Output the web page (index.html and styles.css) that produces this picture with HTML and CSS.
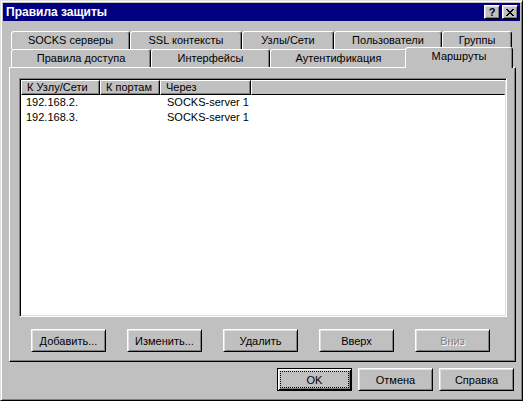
FILE: index.html
```html
<!DOCTYPE html>
<html lang="ru">
<head>
<meta charset="utf-8">
<title>Правила защиты</title>
<link rel="stylesheet" href="styles.css">
</head>
<body>
<div class="window">
  <div class="titlebar">
    <span class="title">Правила защиты</span>
    <div class="tbtns">
      <span class="tbtn help">?</span>
      <span class="tbtn close">
        <svg width="8" height="7" viewBox="0 0 8 7" shape-rendering="crispEdges"><path fill="#000" d="M0 0h2v1h-2z M6 0h2v1h-2z M1 1h2v1h-2z M5 1h2v1h-2z M2 2h4v1h-4z M3 3h2v1h-2z M2 4h4v1h-4z M1 5h2v1h-2z M5 5h2v1h-2z M0 6h2v1h-2z M6 6h2v1h-2z"/></svg>
      </span>
    </div>
  </div>
  <div class="content">
    <div class="tabrow back">
      <div class="tab w-socks">SOCKS серверы</div>
      <div class="tab w-ssl">SSL контексты</div>
      <div class="tab w-nodes">Узлы/Сети</div>
      <div class="tab w-users">Пользователи</div>
      <div class="tab w-groups">Группы</div>
    </div>
    <div class="tabrow front">
      <div class="tab w-access">Правила доступа</div>
      <div class="tab w-ifaces">Интерфейсы</div>
      <div class="tab w-auth">Аутентификация</div>
      <div class="tab selected w-routes">Маршруты</div>
    </div>
    <div class="panel">
      <div class="list">
        <div class="lhead">
          <div class="hc c1">К Узлу/Сети</div>
          <div class="hc c2">К портам</div>
          <div class="hc c3">Через</div>
          <div class="hc c4"></div>
        </div>
        <div class="lrow">
          <span class="rc c1">192.168.2.</span>
          <span class="rc c2"></span>
          <span class="rc c3">SOCKS-server 1</span>
        </div>
        <div class="lrow">
          <span class="rc c1">192.168.3.</span>
          <span class="rc c2"></span>
          <span class="rc c3">SOCKS-server 1</span>
        </div>
      </div>
      <div class="btnrow">
        <button class="btn">Добавить...</button>
        <button class="btn">Изменить...</button>
        <button class="btn">Удалить</button>
        <button class="btn">Вверх</button>
        <button class="btn disabled">Вниз</button>
      </div>
    </div>
    <div class="dlgbtns">
      <button class="btn default">OK</button>
      <button class="btn">Отмена</button>
      <button class="btn">Справка</button>
    </div>
  </div>
</div>
</body>
</html>
```
FILE: styles.css
```css
html, body {
  margin: 0;
  padding: 0;
  background: #c0c0c0;
}
body {
  font-family: "Liberation Sans", Arial, sans-serif;
  font-size: 11px;
  color: #000;
}
.window {
  box-sizing: border-box;
  width: 523px;
  height: 401px;
  background: #c0c0c0;
  border: 1px solid;
  border-color: #dfdfdf #000 #000 #dfdfdf;
  box-shadow: inset 1px 1px #fff, inset -1px -1px #808080;
  padding: 2px;
}
.titlebar {
  height: 18px;
  background: #000080;
  color: #fff;
  display: flex;
  align-items: center;
  justify-content: space-between;
  padding: 0 2px 0 3px;
}
.title {
  font-weight: bold;
  font-size: 12px;
  white-space: nowrap;
}
.tbtns {
  display: flex;
  gap: 2px;
}
.tbtn {
  box-sizing: border-box;
  width: 16px;
  height: 14px;
  background: #c0c0c0;
  border: 1px solid;
  border-color: #fff #000 #000 #fff;
  box-shadow: inset 1px 1px #dfdfdf, inset -1px -1px #808080;
  display: flex;
  align-items: center;
  justify-content: center;
  color: #000;
}
.tbtn.help {
  font-weight: bold;
  font-size: 11px;
  line-height: 11px;
}
.tbtn svg {
  display: block;
}
.content {
  padding: 10px 4px 0 6px;
}
.tabrow {
  display: flex;
  height: 18px;
  padding-left: 2px;
}
.tabrow.front {
  align-items: flex-end;
}
.tab {
  box-sizing: border-box;
  height: 18px;
  flex: none;
  background: #c0c0c0;
  border: 1px solid;
  border-bottom: 0;
  border-color: #fff #000 transparent #fff;
  border-radius: 3px 3px 0 0;
  box-shadow: inset -1px 0 #808080;
  text-align: center;
  padding-top: 2px;
  line-height: 13px;
  white-space: nowrap;
}
.tab.selected {
  height: 21px;
  margin: 0 -2px -1px -2px;
  position: relative;
  z-index: 1;
}
.w-socks { width: 119px; }
.w-ssl { width: 112px; }
.w-nodes { width: 92px; }
.w-users { width: 108px; }
.w-groups { width: 70px; }
.w-access { width: 140px; }
.w-ifaces { width: 119px; }
.w-auth { width: 137px; }
.w-routes { width: 108px; }
.panel {
  box-sizing: border-box;
  width: 507px;
  height: 295px;
  border: 1px solid;
  border-color: #fff #000 #000 #fff;
  box-shadow: inset -1px -1px #808080;
  padding: 10px 8px 0 9px;
}
.list {
  box-sizing: border-box;
  height: 239px;
  background: #fff;
  border: 1px solid;
  border-color: #808080 #fff #fff #808080;
  box-shadow: inset 1px 1px #000, inset -1px -1px #dfdfdf;
  padding: 1px;
  overflow: hidden;
}
.lhead {
  display: flex;
  height: 15px;
}
.hc {
  box-sizing: border-box;
  height: 15px;
  background: #c0c0c0;
  border: 1px solid;
  border-color: #fff #000 #000 #fff;
  box-shadow: inset -1px -1px #808080;
  padding-left: 5px;
  line-height: 13px;
  white-space: nowrap;
  overflow: hidden;
  flex: none;
}
.c1 { width: 79px; }
.c2 { width: 60px; }
.c3 { width: 91px; }
.hc.c4 { flex: 1; border-right-color: #c0c0c0; box-shadow: none; }
.lrow {
  display: flex;
  height: 15px;
  line-height: 15px;
}
.rc {
  box-sizing: border-box;
  flex: none;
  white-space: nowrap;
  padding-left: 7px;
}
.rc.c1 { padding-left: 5px; }
.btnrow {
  display: flex;
  gap: 21px;
  margin-top: 12px;
  padding-left: 12px;
}
.btn {
  box-sizing: border-box;
  width: 75px;
  height: 23px;
  padding: 0;
  margin: 0;
  background: #c0c0c0;
  border: 1px solid;
  border-color: #fff #000 #000 #fff;
  box-shadow: inset 1px 1px #dfdfdf, inset -1px -1px #808080;
  font-family: "Liberation Sans", Arial, sans-serif;
  font-size: 11px;
  color: #000;
  flex: none;
}
.btn.disabled {
  color: #808080;
  text-shadow: 1px 1px 0 #fff;
}
.btn.default {
  border-color: #000;
  box-shadow: inset 1px 1px #fff, inset -1px -1px #000, inset 2px 2px #dfdfdf, inset -2px -2px #808080;
  outline: 1px dotted #000;
  outline-offset: -4px;
}
.dlgbtns {
  display: flex;
  justify-content: flex-end;
  gap: 6px;
  margin-top: 6px;
  margin-right: 2px;
}
```
